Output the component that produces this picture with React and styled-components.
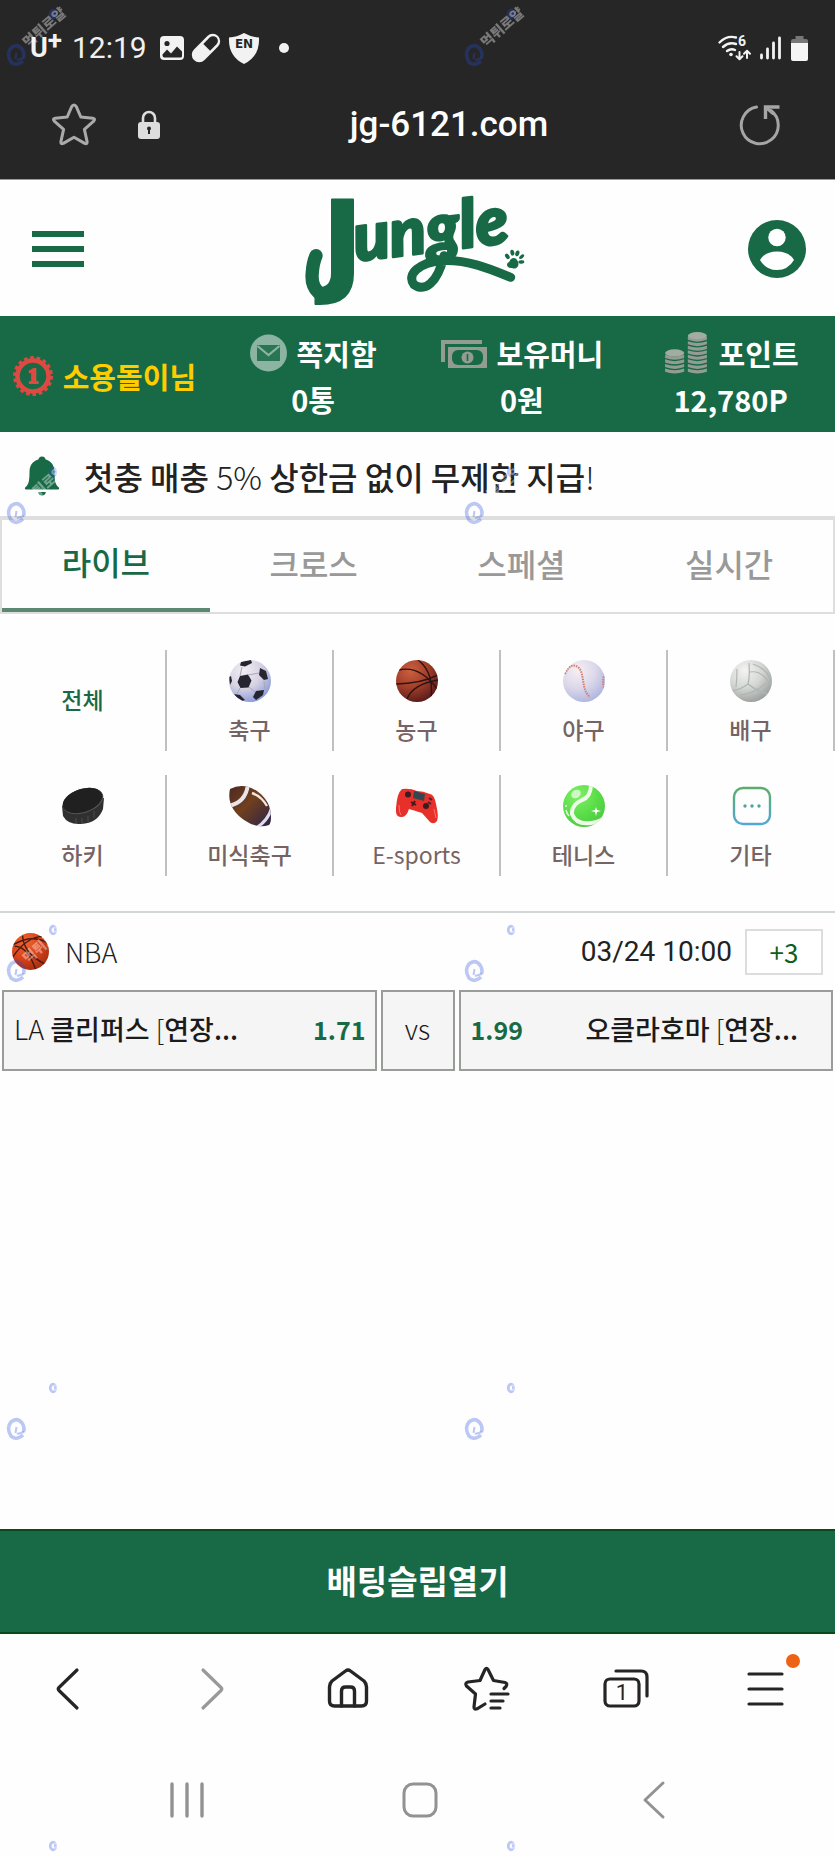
import React from "react";
import styled, { createGlobalStyle } from "styled-components";

const GREEN = "#186a46";
const KR = '"Noto Sans CJK KR", sans-serif';
const ROBOTO = 'Roboto, "Noto Sans CJK KR", sans-serif';

const GlobalStyle = createGlobalStyle`
  *, *::before, *::after { box-sizing: border-box; }
  body { margin: 0; background: #fefefe; font-family: ${KR}; color: #222; }
  button { font: inherit; color: inherit; border: 0; padding: 0; background: none; cursor: pointer; }
  a { color: inherit; text-decoration: none; }
  svg { display: block; flex: none; overflow: visible; }
`;

const Page = styled.div`
  position: relative;
  display: flex;
  flex-direction: column;
  min-height: 100vh;
  overflow: hidden;
`;

/* ---------- phone chrome ---------- */
const Chrome = styled.div`
  background: #262626;
  color: #fff;
  font-family: ${ROBOTO};
  border-bottom: 1px solid #999;
`;

const StatusBar = styled.div`
  display: flex;
  align-items: center;
  height: 72px;
  padding: 24px 27px 0 30px;
`;

const Carrier = styled.span`
  display: flex;
  width: 42px;
  color: #f2f2f2;
  font: 700 27px/32px Roboto, sans-serif;

  sup {
    font-size: 26px;
    line-height: 16px;
  }
`;

const Clock = styled.span`
  width: 88px;
  font-size: 30px;
  line-height: 36px;
  color: #f0f0f0;
`;

const StatusIcons = styled.div`
  display: flex;
  align-items: center;
  gap: ${(p) => p.$gap}px;
  margin-left: ${(p) => (p.$end ? "auto" : "0")};
`;

const AddressBar = styled.div`
  display: grid;
  grid-template-columns: 124px 1fr 74px;
  align-items: center;
  height: 107px;
  padding: 0 37px 2px 50px;
`;

const AddressIcons = styled.div`
  display: flex;
  align-items: center;
  gap: 40px;
`;

const Address = styled.span`
  text-align: center;
  font-size: 35px;
  line-height: 44px;
  font-weight: 500;
`;

const AddressEnd = styled.div`
  display: flex;
  justify-content: flex-end;
  padding-right: 17px;
`;

/* ---------- site header ---------- */
const Header = styled.header`
  display: flex;
  align-items: center;
  justify-content: space-between;
  height: 136px;
  padding: 2px 29px 0 32px;
`;

const IconButton = styled.button`
  display: flex;
  align-items: center;
  justify-content: center;
`;

const MenuBars = styled.span`
  display: flex;
  flex-direction: column;
  gap: 9px;
  width: 52px;

  i {
    height: 6px;
    background: ${GREEN};
  }
`;

const UserBar = styled.section`
  display: grid;
  grid-template-columns: repeat(4, 1fr);
  height: 116px;
  padding-top: 4px;
  background: ${GREEN};
  color: #fff;
  font-size: 29px;
  font-weight: 700;
  line-height: 40px;
`;

const UserCell = styled.div`
  display: flex;
  flex-direction: column;
  align-items: center;
  justify-content: center;
  gap: 6px;
`;

const UserRow = styled.div`
  display: flex;
  align-items: center;
  gap: 10px;
  height: 40px;
  white-space: nowrap;
  color: ${(p) => (p.$accent ? "#ffcc00" : "#fff")};
`;

const Notice = styled.div`
  display: flex;
  align-items: center;
  gap: 24px;
  height: 84px;
  padding: 4px 24px 0;
  font-size: 32px;
  line-height: 44px;
  font-weight: 500;
  white-space: nowrap;
`;

const Thin = styled.span`
  font-weight: 300;
`;

/* ---------- tabs & categories ---------- */
const Tabs = styled.nav`
  display: grid;
  grid-template-columns: repeat(4, 1fr);
  border: 2px solid #dedede;
  border-top-width: 4px;
`;

const Tab = styled.button`
  height: 92px;
  padding-bottom: ${(p) => (p.$active ? 6 : 2)}px;
  border-bottom: 4px solid ${(p) => (p.$active ? "#5a8870" : "transparent")};
  color: ${(p) => (p.$active ? GREEN : "#999")};
  font-size: 32px;
  line-height: 44px;
  font-weight: 500;
`;

const Sports = styled.div`
  display: grid;
  grid-template-columns: repeat(5, 1fr);
  row-gap: 24px;
  padding: 36px 0 35px;
  border-bottom: 2px solid #d2d6d5;
`;

const Sport = styled.button`
  display: flex;
  flex-direction: column;
  align-items: center;
  justify-content: center;
  gap: 11px;
  height: 101px;
  padding: ${(p) => (p.$active ? "0 0 3px" : "3px 0 0")};
  border-right: 2px solid ${(p) => (p.$last ? "transparent" : "#c0c0c0")};
  color: ${(p) => (p.$active ? GREEN : "#756463")};
  font-size: 23px;
  line-height: 32px;
  font-weight: ${(p) => (p.$latin ? 400 : 500)};
`;

/* ---------- match list ---------- */
const LeagueRow = styled.div`
  display: flex;
  align-items: center;
  height: 77px;
  padding: 0 12px;
`;

const League = styled.span`
  margin-left: 16px;
  font-size: 27px;
  line-height: 36px;
  font-weight: 300;
`;

const Kickoff = styled.time`
  margin-left: auto;
  font: 400 28px/36px Roboto, sans-serif;
`;

const More = styled.button`
  width: 78px;
  height: 46px;
  margin-left: 13px;
  border: 2px solid #dcdcdc;
  color: #0d5f20;
  font-size: 26px;
  line-height: 36px;
  background: #fff;
`;

const Match = styled.div`
  display: grid;
  grid-template-columns: 1fr 74px 1fr;
  gap: 4px;
  padding: 0 2px;
`;

const Pick = styled.button`
  display: flex;
  align-items: center;
  justify-content: ${(p) => (p.$center ? "center" : "space-between")};
  height: 81px;
  padding: 0 ${(p) => (p.$away ? "33px" : "9px")} 3px ${(p) => (p.$center ? "9px" : "10px")};
  border: 2px solid #999c99;
  background: #f5f5f5;
  color: #1b1b1b;
  font-size: 27px;
  line-height: 36px;
  font-weight: 500;
  white-space: nowrap;
`;

const Odds = styled.strong`
  color: ${GREEN};
  font-size: 25px;
  font-weight: 700;
`;

const Spacer = styled.div`
  flex: 1;
`;

const SlipButton = styled.button`
  height: 105px;
  padding-bottom: 4px;
  background: ${GREEN};
  border: solid #0a4a1a;
  border-width: 2px 0;
  color: #fff;
  font-size: 33px;
  line-height: 44px;
  font-weight: 700;
`;

/* ---------- browser & system bars ---------- */
const BrowserBar = styled.nav`
  display: grid;
  grid-template-columns: repeat(6, 1fr);
  height: 110px;
  color: #252525;
`;

const SystemBar = styled.nav`
  display: grid;
  grid-template-columns: repeat(3, 1fr);
  height: 112px;
  padding: 0 64px 0 70px;
  color: #929292;
`;

const Overlay = styled.svg`
  position: absolute;
  inset: 0;
  width: 100%;
  height: 100%;
  pointer-events: none;
`;

/* ---------- drawings ---------- */
const line = { fill: "none", stroke: "currentColor", strokeLinecap: "round", strokeLinejoin: "round" };

const STAR = "M22 3q1.500 0 2.300 1.700l4.500 10.300 12 1.200q3 .6 .9 3l-9.300 8.200 2.700 12.200q.3 3-2.400 1.800L22 35.200l-10.700 6.200q-2.700 1.200-2.400-1.800l2.700-12.200-9.300-8.200q-2.100-2.400.9-3l12-1.200 4.500-10.300q.8-1.700 2.300-1.700z";

const ImageIcon = () => (
  <svg width="24" height="24" viewBox="0 0 24 24">
    <rect width="24" height="24" rx="4" fill="#f2f2f2" />
    <circle cx="7" cy="7.500" r="2.600" fill="#262626" />
    <path d="M2.500 18.500 7 13.500l4 4 6-7 5 5v4.500q0 1.500-1.500 1.500h-16q-2 0-2-2z" fill="#262626" />
  </svg>
);

const PillIcon = () => (
  <svg width="28" height="28" viewBox="0 0 28 28">
    <g transform="rotate(-45 14 14)">
      <rect x="-3" y="6.500" width="34" height="15" rx="7.500" fill="#f2f2f2" />
      <path d="M15 9.200h9a4.800 4.800 0 0 1 0 9.600h-9z" fill="#262626" />
    </g>
  </svg>
);

const ShieldIcon = () => (
  <svg width="32" height="31" viewBox="0 0 32 31">
    <path d="M16 0q7 4 15 4.500Q32 23 16 31 0 23 1 4.500 9 4 16 0z" fill="#f2f2f2" />
    <text x="16" y="15" textAnchor="middle" fontFamily="DejaVu Sans, sans-serif" fontSize="12" fontWeight="700" fill="#262626">EN</text>
  </svg>
);

const WifiIcon = () => (
  <svg width="33" height="26" viewBox="0 0 33 26" color="#f2f2f2">
    <g {...line} strokeWidth="2.400">
      <path d="M1.500 7.500Q9 0 18 2.500M5 12q6-5.500 13-3M9 16q4-3 8-1" />
      <path d="M21.500 17v7m-3-2.800 3 3 3-3M29 23v-7m-3 2.800 3-3 3 3" strokeWidth="2" />
    </g>
    <circle cx="13" cy="19.500" r="1.800" fill="#f2f2f2" />
    <text x="20" y="11" fontFamily="Roboto, sans-serif" fontSize="14" fontWeight="700" fill="#f2f2f2">6</text>
  </svg>
);

const SignalIcon = () => (
  <svg width="22" height="24" viewBox="0 0 22 24">
    <path d="M1.500 19v3M7.500 13v9M13.500 7v15M19.500 2v20" stroke="#f2f2f2" strokeWidth="2.800" strokeLinecap="round" />
  </svg>
);

const BatteryIcon = () => (
  <svg width="17" height="25" viewBox="0 0 17 25">
    <path d="M4.500 0h8v3H15q2 0 2 2v3H0V5q0-2 2-2h2.500z" fill="#777" />
    <path d="M0 7h17v16q0 2-2 2H2q-2 0-2-2z" fill="#f5f5f5" />
  </svg>
);

const LockIcon = () => (
  <svg width="22" height="30" viewBox="0 0 22 30">
    <path d="M5 13V8a6 6 0 0 1 12 0v5" fill="none" stroke="#ddd" strokeWidth="2.600" />
    <rect y="12" width="22" height="17" rx="3" fill="#ddd" />
    <circle cx="11" cy="18.500" r="2" fill="#262626" />
    <path d="M10 18h2v6h-2z" fill="#262626" />
  </svg>
);

const ReloadIcon = () => (
  <svg width="42" height="42" viewBox="0 0 42 42" color="#a5a5a5">
    <g {...line} strokeWidth="3">
      <path d="M17.500 3A18.500 18.500 0 1 0 32 6.500" />
      <path d="M26.500 15V3h14" strokeWidth="3.400" strokeLinejoin="miter" strokeLinecap="butt" />
      <path d="m27 3.500 7 6" />
    </g>
  </svg>
);

const Paw = () => (
  <g fill={GREEN}>
    <path d="M705 233q11-4 16 8 5 9 0 17-7 9-17 4-13 1-15-8-1-8 7-11 2-8 9-10z" />
    <ellipse cx="690" cy="227" rx="6" ry="9" transform="rotate(-35 690 227)" />
    <ellipse cx="705" cy="216" rx="6" ry="9" transform="rotate(-10 705 216)" />
    <ellipse cx="720" cy="218" rx="6" ry="9" transform="rotate(20 720 218)" />
    <ellipse cx="733" cy="228" rx="5" ry="9" transform="rotate(50 733 228)" />
    <ellipse cx="732" cy="244" rx="5" ry="9" transform="rotate(85 732 244)" />
  </g>
);

const Logo = () => (
  <svg width="224" height="114" viewBox="80 34 672 342" role="img" aria-label="Jungle">
    <g fill={GREEN} stroke={GREEN} strokeLinejoin="round" fontStyle="italic">
      <text x="133" y="302" fontSize="335" strokeWidth="6" fontFamily="DejaVu Sans, sans-serif" fontWeight="700" fontStyle="normal">J</text>
      <text x="236" y="242" fontSize="200" strokeWidth="8" transform="rotate(-7 236 242)" fontFamily="Lato, sans-serif" fontWeight="900">ungle</text>
    </g>
    <g fill="none" stroke={GREEN} strokeLinecap="round" strokeLinejoin="round">
      <path d="M166 344C140 358 98 330 105 275Q107 245 116 225" strokeWidth="40" />
      <path d="M500 225C480 310 440 335 410 312 385 280 430 245 490 240 570 235 640 265 700 290" strokeWidth="27" />
    </g>
    <Paw />
  </svg>
);

const ProfileIcon = () => (
  <svg width="58" height="58" viewBox="0 0 58 58">
    <circle cx="29" cy="29" r="29" fill={GREEN} />
    <circle cx="29" cy="17.500" r="8.700" fill="#fff" />
    <path d="M12 40q5-8.500 17-8.500T46 40q-6 10-17 10T12 40z" fill="#fff" />
  </svg>
);

const BadgeIcon = () => (
  <svg width="40" height="42" viewBox="0 0 40 42">
    <circle cx="20" cy="21" r="15.500" fill="none" stroke="#dc4a42" strokeWidth="4.500" />
    <circle cx="20" cy="21" r="18.500" fill="none" stroke="#dc4a42" strokeWidth="3" strokeDasharray="3.600 2.850" />
    <text x="20" y="28" textAnchor="middle" fontFamily="Liberation Serif, serif" fontSize="21" fontWeight="700" fill="#dc4a42" stroke="#dc4a42" strokeWidth="2">1</text>
  </svg>
);

const MailIcon = () => (
  <svg width="37" height="38" viewBox="0 0 37 38">
    <circle cx="18.500" cy="19" r="18.500" fill="#8bb5a2" />
    <path d="M7 11h23v16H7z" fill={GREEN} opacity=".85" />
    <path d="m7.500 12 11 9 11-9" fill="none" stroke="#8bb5a2" strokeWidth="2.200" />
  </svg>
);

const MoneyIcon = () => (
  <svg width="46" height="30" viewBox="0 0 46 30">
    <path d="M2 24V4h39" fill="none" stroke="#929c92" strokeWidth="4" />
    <rect x="7" y="9" width="39" height="21" fill="#929c92" />
    <rect x="11" y="12" width="31" height="15" rx="6" fill={GREEN} />
    <circle cx="26.500" cy="19.500" r="6" fill="#929c92" />
    <path d="M26.500 16v7" stroke={GREEN} strokeWidth="1.600" />
  </svg>
);

const coins = (x, top, count) =>
  Array.from({ length: count }, (_, i) => (
    <path key={`${x}-${i}`} d={`M${x} ${top + i * 5}q10.500 4 21 0v3.500q-10.500 4-21 0z`} fill="#929c92" />
  ));

const CoinsIcon = () => (
  <svg width="46" height="40" viewBox="0 0 46 44">
    {coins(0, 24, 4)}
    {coins(25, 4, 8)}
    <ellipse cx="10.500" cy="22" rx="10.500" ry="4" fill="#a2aca2" />
    <ellipse cx="35.500" cy="3" rx="10.500" ry="4" fill="#a2aca2" />
  </svg>
);

const BellIcon = () => (
  <svg width="36" height="40" viewBox="0 0 36 40" fill={GREEN}>
    <circle cx="18" cy="4" r="3.500" />
    <path d="M18 3c8 0 12.500 5.500 12.500 13 0 9 1 13 4 15q1.500 2-.5 2.500H2Q0 33 1.500 31c3-2 4-6 4-15C5.500 8.500 10 3 18 3z" />
    <path d="M14 36h8q-1 3.500-4 3.500T14 36z" />
  </svg>
);

const Ball = ({ id, stops, size = 42, children }) => (
  <svg width={size} height={size} viewBox="0 0 42 42">
    <defs>
      <radialGradient id={id} cx=".35" cy=".25" r=".85">
        {stops.map((color, i) => (
          <stop key={color} offset={i / (stops.length - 1)} stopColor={color} />
        ))}
      </radialGradient>
      <clipPath id={`${id}-clip`}><circle cx="21" cy="21" r="21" /></clipPath>
    </defs>
    <g clipPath={`url(#${id}-clip)`}>
      <rect width="42" height="42" fill={`url(#${id})`} />
      {children}
    </g>
  </svg>
);

const Soccer = () => (
  <Ball id="soccer" stops={["#f2edf3", "#d6d2e2", "#7d93d8"]}>
    <g fill="#26242e">
      <path d="m11 16 8-1.500 3.500 6-3 7-8 .5-3-6zM31 8l6 3 2 8-4 1-5-5zM12 2l10-2 1 3-7 3.500-5-1zM27 31l8-1-1 5-7 5-3-3zM5 34l6 1 5 5-5 2zM0 17l2-1 1 5-2 4z" />
    </g>
    <path d="m19 15 11-2M20 27l6 5M11 28l-3 6M11 16l2-9M35 21l1 9" stroke="#aaa6b5" fill="none" />
  </Ball>
);

const Basketball = () => (
  <Ball id="basket" stops={["#cc6040", "#a03e28", "#4b1519"]}>
    <g fill="none" stroke="#2e1215" strokeWidth="1.400">
      <path d="M0 24Q24 24 42 15M3 10Q24 5 42 30M22 0Q38 12 35 38M11 39Q17 24 42 20" />
    </g>
  </Ball>
);

const Baseball = () => (
  <Ball id="baseball" stops={["#f5eff4", "#dcd8ea", "#a6b0dd"]}>
    <path d="M2 14Q8 1 16 8c6 7 2 22 11 29" fill="none" stroke="#d97c6c" strokeWidth="2" strokeDasharray="1.500 1" />
    <path d="M42 14q-4 8 0 16" fill="none" stroke="#d97c6c" strokeWidth="2" strokeDasharray="1.500 1" />
  </Ball>
);

const Volleyball = () => (
  <Ball id="volley" stops={["#f4f4f2", "#d3d6d3", "#8f9694"]}>
    <g fill="none" stroke="#b0b5b3" strokeWidth="1.200">
      <path d="M19 3q1 14-1 21M18 24Q10 30 2 31M18 24q10 8 20 10M20 12q12-2 20 12M23 4q12 4 17 14M7 9q0 10-1 18M10 35q14-1 26-12" />
    </g>
  </Ball>
);

const Puck = () => (
  <svg width="42" height="42" viewBox="0 0 42 42">
    <path d="M0 21 1 31q5 9 18 8 17-1 22-15l1-11z" fill="#303030" />
    <path d="M14 33v5M20 33v6M26 31v6M32 26v7" stroke="#686868" opacity=".5" />
    <ellipse cx="21" cy="16" rx="21" ry="12" transform="rotate(-18 21 16)" fill="#555" />
    <ellipse cx="20.500" cy="15.500" rx="20.500" ry="11.500" transform="rotate(-18 20.500 15.500)" fill="#202020" />
  </svg>
);

const Football = () => (
  <svg width="42" height="42" viewBox="0 0 42 42">
    <defs>
      <linearGradient id="pigskin" x1="0" y1="0" x2="1" y2="1">
        <stop offset="0" stopColor="#4a2822" /><stop offset=".45" stopColor="#70401f" /><stop offset="1" stopColor="#2b2147" />
      </linearGradient>
      <clipPath id="footclip"><path d="M1 4Q14-3 28 6q14 10 14 26 0 6-2 8-12 4-25-5Q-3 22 1 4z" /></clipPath>
    </defs>
    <g clipPath="url(#footclip)">
      <rect width="42" height="42" fill="url(#pigskin)" />
      <path d="M-1 21Q17 18 19-1" fill="none" stroke="#e8e4ea" strokeWidth="4" />
      <path d="M27 43Q39 36 43 22" fill="none" stroke="#dcdcf2" strokeWidth="3" />
      <path d="M23 8q9 3 15 13" fill="none" stroke="#f6e7dc" strokeWidth="2.400" />
    </g>
  </svg>
);

const Gamepad = () => (
  <svg width="42" height="42" viewBox="0 0 42 42">
    <path d="M6 4q8-1 15 2 6 0 13 3 4 0 6 10 3 13 1 17-3 4-7 1l-8-9Q17 25 13 24q-3 9-8 8-6 0-5-9Q1 8 6 4z" fill="#e8302a" />
    <path d="M18 6 29 9l-1 7-11-3z" fill="#36464e" />
    <circle cx="12" cy="9.500" r="3" fill="#3b1c20" /><circle cx="30" cy="21" r="3" fill="#3b1c20" />
    <path d="m15 17 5 3m-1-4-3 5" stroke="#47191b" strokeWidth="2" />
    <path d="m33 13 3 2m-4 2 3 2" stroke="#46262a" strokeWidth="2" />
    <path d="M3 20q0 8 2 10M38 24l2 9" stroke="#ff756d" fill="none" />
  </svg>
);

const Tennis = () => (
  <Ball id="tennis" stops={["#81ef67", "#5ddf4b", "#48c83e"]}>
    <path d="M28-1q0 13-9 16Q8 20 9 29q4 11 19 9 10-1 15-7" fill="none" stroke="#effbe9" strokeWidth="4" />
    <ellipse cx="13" cy="9" rx="5" ry="4" fill="#cdf9c4" transform="rotate(-30 13 9)" />
    <path d="m33 22 1 3 4 1-4 1-1 4-1-4-4-1 4-1z" fill="#fff" />
    <circle cx="3" cy="21" r="1" fill="#dffbda" /><path d="M3 25q1 4 3 6" stroke="#dffbda" strokeWidth="1.500" fill="none" />
  </Ball>
);

const OtherIcon = () => (
  <svg width="42" height="42" viewBox="0 0 42 42">
    <defs>
      <linearGradient id="other" x1="0" y1="0" x2="0" y2="1">
        <stop offset="0" stopColor="#5aad6b" /><stop offset="1" stopColor="#54a8d2" />
      </linearGradient>
    </defs>
    <rect x="4" y="3" width="36" height="36" rx="9" fill="none" stroke="url(#other)" strokeWidth="2.400" />
    <g fill="#4fa49f"><circle cx="15" cy="21" r="1.700" /><circle cx="22" cy="21" r="1.700" /><circle cx="29" cy="21" r="1.700" /></g>
  </svg>
);

const LeagueBall = () => (
  <Ball id="league" size={37} stops={["#ee6533", "#da431a", "#9a2b10"]}>
    <g fill="none" stroke="#4a1b10" strokeWidth="1.600">
      <path d="M2 13Q22 1 40 11M1 27Q18 2 39 4M12 3q1 20 25 32M3 15q15 0 24 27" />
    </g>
  </Ball>
);

const HomeIcon = () => (
  <svg width="42" height="44" viewBox="0 0 42 44">
    <g {...line} strokeWidth="3.400">
      <path d="M18.500 4q2.500-2 5 0L37 14q2.500 2.500 2.500 6v14q0 5-5 5h-27q-5 0-5-5V20q0-3.500 2.500-6z" />
      <path d="M14.500 39V24q0-4 4-4h5q4 0 4 4v15" />
    </g>
  </svg>
);

const FavoritesIcon = () => (
  <svg width="46" height="46" viewBox="0 0 46 46">
    <g {...line} strokeWidth="3.200">
      <path d="M40 22.500l2-2q2-3-1-4l-11.500-2L24 3.500q-1.500-2.500-3 0L16 14.500 4 16q-3.500 1-1.500 4l9 8-1.500 13q0 3 3 1.800l8-4.800" />
      <path d="M27 28h17M27 35h12M27 42h9" />
    </g>
  </svg>
);

const TabsIcon = () => (
  <svg width="46" height="42" viewBox="0 0 46 42">
    <g {...line} strokeWidth="3.200">
      <rect x="2" y="11" width="34" height="27" rx="5" />
      <path d="M13 3h25q6 0 6 6v19" />
    </g>
    <text x="19" y="32" textAnchor="middle" fontFamily="Roboto, sans-serif" fontSize="22" fill="currentColor">1</text>
  </svg>
);

const NavMenuIcon = () => (
  <svg width="56" height="70" viewBox="0 0 56 70">
    <path d="M12 20h33M12 35h33M12 50h33" {...line} strokeWidth="3.200" />
  </svg>
);

const NotifyWrap = styled.span`
  position: relative;
  display: block;

  &::after {
    content: "";
    position: absolute;
    top: 0;
    right: -7px;
    width: 14px;
    height: 14px;
    border-radius: 50%;
    background: #ee6216;
  }
`;

const Chevron = ({ right }) => (
  <svg width="28" height="42" viewBox={right ? "-6 0 28 42" : "0 0 28 42"}>
    <path d={right ? "M2 2 20 19.500q1.500 1.500 0 3L2 40" : "M21 2 3 19.500q-1.500 1.500 0 3L21 40"} {...line} strokeWidth="3.200" />
  </svg>
);

const Watermark = () => (
  <Overlay aria-hidden="true">
    <defs>
      <pattern id="mark" width="458" height="458" patternUnits="userSpaceOnUse">
        <g fill="none" stroke="#2148de" strokeOpacity=".3">
          <path d="M23 61Q16 67 11 62 6 54 11 48q6-5 11 1 3 4 1.500 9" strokeWidth="3.600" />
          <path d="m16.500 53-1 6M17 60l7-2" strokeWidth="2" />
          <ellipse cx="53" cy="14" rx="2.600" ry="3.800" strokeWidth="3" />
        </g>
        <text x="28" y="48" fontSize="14" fontWeight="900" fontFamily={KR} fill="#fff" fillOpacity=".38" transform="rotate(-41 28 48)">먹튀로얄</text>
      </pattern>
    </defs>
    <rect width="100%" height="100%" fill="url(#mark)" />
  </Overlay>
);

const SPORTS = [
  { label: "전체", active: true },
  { label: "축구", Icon: Soccer },
  { label: "농구", Icon: Basketball },
  { label: "야구", Icon: Baseball },
  { label: "배구", Icon: Volleyball },
  { label: "하키", Icon: Puck },
  { label: "미식축구", Icon: Football },
  { label: "E-sports", Icon: Gamepad, latin: true },
  { label: "테니스", Icon: Tennis },
  { label: "기타", Icon: OtherIcon, last: true },
];

const ACCOUNT = [
  { label: "쪽지함", value: "0통", Icon: MailIcon },
  { label: "보유머니", value: "0원", Icon: MoneyIcon },
  { label: "포인트", value: "12,780P", Icon: CoinsIcon },
];

const Muted = styled(IconButton)`
  color: #999;
`;

export default function App() {
  return (
    <Page>
      <GlobalStyle />
      <Chrome>
        <StatusBar>
          <Carrier>U<sup>+</sup></Carrier>
          <Clock>12:19</Clock>
          <StatusIcons $gap={8}>
            <ImageIcon />
            <PillIcon />
            <ShieldIcon />
            <svg width="32" height="10" viewBox="0 0 32 10"><circle cx="16" cy="5" r="5" fill="#f2f2f2" /></svg>
          </StatusIcons>
          <StatusIcons $gap={9} $end>
            <WifiIcon />
            <SignalIcon />
            <BatteryIcon />
          </StatusIcons>
        </StatusBar>
        <AddressBar>
          <AddressIcons>
            <IconButton aria-label="즐겨찾기">
              <svg width="48" height="48" viewBox="-2 0 48 46" color="#aaa"><path d={STAR} {...line} strokeWidth="3" /></svg>
            </IconButton>
            <LockIcon />
          </AddressIcons>
          <Address>jg-6121.com</Address>
          <AddressEnd>
            <IconButton aria-label="새로고침"><ReloadIcon /></IconButton>
          </AddressEnd>
        </AddressBar>
      </Chrome>

      <Header>
        <IconButton aria-label="메뉴"><MenuBars><i /><i /><i /></MenuBars></IconButton>
        <a href="#home"><Logo /></a>
        <IconButton aria-label="내 정보"><ProfileIcon /></IconButton>
      </Header>

      <UserBar>
        <UserCell>
          <UserRow $accent><BadgeIcon />소용돌이님</UserRow>
        </UserCell>
        {ACCOUNT.map(({ label, value, Icon }) => (
          <UserCell key={label}>
            <UserRow><Icon />{label}</UserRow>
            <UserRow>{value}</UserRow>
          </UserCell>
        ))}
      </UserBar>

      <Notice>
        <BellIcon />
        <span>첫충 매충 <Thin>5%</Thin> 상한금 없이 무제한 지급<Thin>!</Thin></span>
      </Notice>

      <Tabs>
        <Tab $active>라이브</Tab>
        <Tab>크로스</Tab>
        <Tab>스페셜</Tab>
        <Tab>실시간</Tab>
      </Tabs>

      <Sports>
        {SPORTS.map(({ label, Icon, active, latin, last }) => (
          <Sport key={label} $active={active} $latin={latin} $last={last}>
            {Icon && <Icon />}
            {label}
          </Sport>
        ))}
      </Sports>

      <LeagueRow>
        <LeagueBall />
        <League>NBA</League>
        <Kickoff>03/24 10:00</Kickoff>
        <More>+3</More>
      </LeagueRow>
      <Match>
        <Pick>
          <span><Thin>LA</Thin> 클리퍼스 <Thin>[</Thin>연장...</span>
          <Odds>1.71</Odds>
        </Pick>
        <Pick $center><Thin>vs</Thin></Pick>
        <Pick $away>
          <Odds>1.99</Odds>
          <span>오클라호마 <Thin>[</Thin>연장...</span>
        </Pick>
      </Match>

      <Spacer />
      <SlipButton>배팅슬립열기</SlipButton>

      <BrowserBar>
        <IconButton aria-label="뒤로"><Chevron /></IconButton>
        <Muted aria-label="앞으로"><Chevron right /></Muted>
        <IconButton aria-label="홈"><HomeIcon /></IconButton>
        <IconButton aria-label="북마크"><FavoritesIcon /></IconButton>
        <IconButton aria-label="탭"><TabsIcon /></IconButton>
        <IconButton aria-label="더보기"><NotifyWrap><NavMenuIcon /></NotifyWrap></IconButton>
      </BrowserBar>
      <SystemBar>
        <IconButton aria-label="최근 앱">
          <svg width="34" height="36" viewBox="0 0 34 36"><path d="M2 2v32M17 2v32M32 2v32" {...line} strokeWidth="3.400" /></svg>
        </IconButton>
        <IconButton aria-label="홈 화면">
          <svg width="36" height="36" viewBox="0 0 36 36"><rect x="2" y="2" width="32" height="32" rx="9" {...line} strokeWidth="3" /></svg>
        </IconButton>
        <IconButton aria-label="이전">
          <svg width="22" height="38" viewBox="0 0 22 38"><path d="M20 2 2 19l18 17" {...line} strokeWidth="3" /></svg>
        </IconButton>
      </SystemBar>
      <Watermark />
    </Page>
  );
}
